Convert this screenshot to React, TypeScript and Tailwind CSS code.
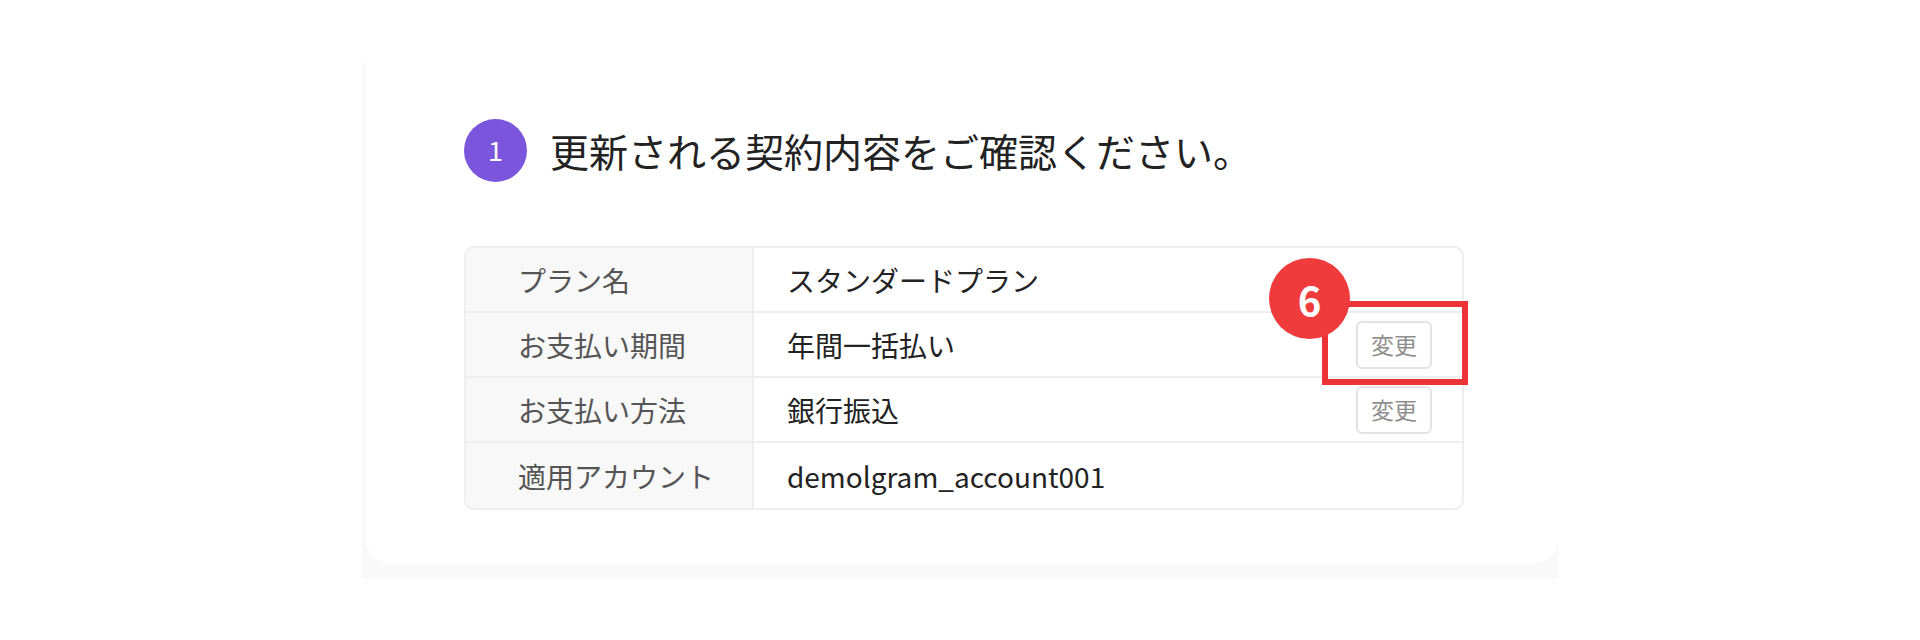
import React from "react";

const rows = [
  { label: "プラン名", value: "スタンダードプラン", editable: false },
  { label: "お支払い期間", value: "年間一括払い", editable: true },
  { label: "お支払い方法", value: "銀行振込", editable: true },
  { label: "適用アカウント", value: "demolgram_account001", editable: false },
];

function ChangeButton() {
  return (
    <button className="h-[48px] w-[76px] rounded-md border-2 border-[#e3e3e3] bg-white text-[23px] text-[#8f8f8f]">
      変更
    </button>
  );
}

function ContractRow({
  label,
  value,
  editable,
  last,
}: {
  label: string;
  value: string;
  editable: boolean;
  last: boolean;
}) {
  return (
    <div className={"flex h-[65px] " + (last ? "" : "border-b-2 border-[#eeeeee]")}>
      <div className="flex w-[288px] shrink-0 items-center border-r-2 border-[#eeeeee] bg-[#f8f8f8] pl-[52px] text-[28px] text-[#555555]">
        {label}
      </div>
      <div className="flex flex-1 items-center justify-between pl-[33px] pr-[30px] text-[28px] text-[#222222]">
        <span>{value}</span>
        {editable && <ChangeButton />}
      </div>
    </div>
  );
}

export default function App() {
  return (
    <div
      className="h-[640px] w-[1920px] bg-white pt-[63px] pl-[362px]"
      style={{ fontFamily: '"Noto Sans CJK JP", "Noto Sans", sans-serif' }}
    >
      <div className="w-[1196px] bg-[#f9f9f9] pl-[4px] pb-[16px]">
        <div className="h-[500px] rounded-b-[24px] bg-white pl-[98px] pt-[56px]">
          <div className="flex items-center gap-[23px]">
            <div className="flex h-[63px] w-[63px] items-center justify-center rounded-full bg-[#7b55db] text-[27px] text-white">
              1
            </div>
            <h1 className="text-[39px] text-[#222222]">更新される契約内容をご確認ください。</h1>
          </div>

          <div className="relative mt-[64px] w-[1000px]">
            <div className="overflow-hidden rounded-[10px] border-2 border-[#eeeeee]">
              {rows.map((row, i) => (
                <ContractRow key={row.label} {...row} last={i === rows.length - 1} />
              ))}
            </div>

            {/* callout around the first change button */}
            <div className="absolute left-[858px] top-[55px] h-[84px] w-[146px] border-[6px] border-[#ec3338]" />
            <div className="absolute left-[805px] top-[12px] flex h-[81px] w-[81px] items-center justify-center rounded-full bg-[#ef3b3b] text-[40px] font-bold text-white">
              6
            </div>
          </div>
        </div>
      </div>
    </div>
  );
}
